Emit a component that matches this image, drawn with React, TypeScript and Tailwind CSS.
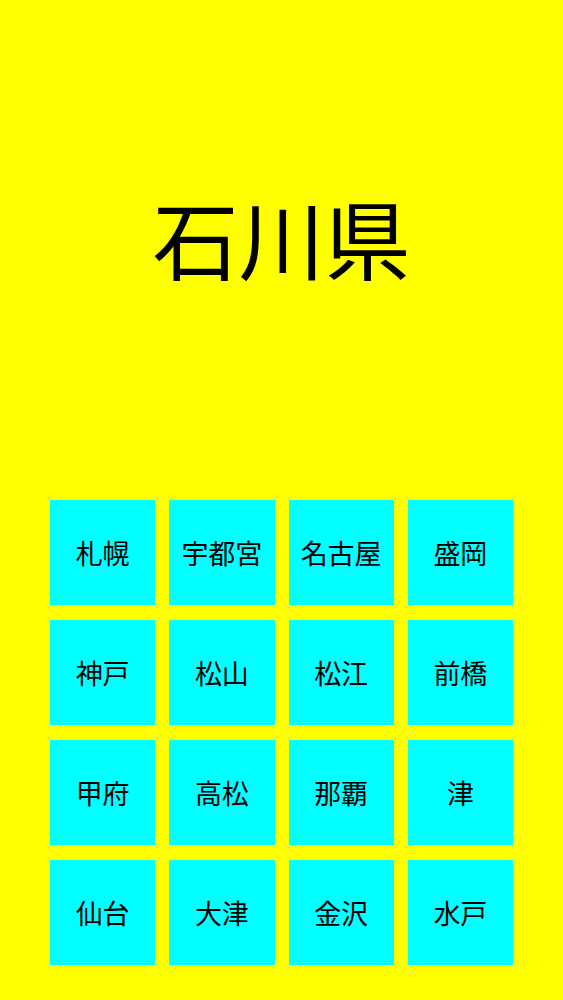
const cities = [
  '札幌', '宇都宮', '名古屋', '盛岡',
  '神戸', '松山', '松江', '前橋',
  '甲府', '高松', '那覇', '津',
  '仙台', '大津', '金沢', '水戸',
]

export default function App() {
  return (
    <div
      className="w-[563px] h-[1000px] bg-[#ffff00] flex flex-col items-center text-black"
      style={{ fontFamily: '"Noto Sans CJK JP", "Noto Sans", sans-serif' }}
    >
      <h1 className="mt-[194px] text-[86px] leading-none font-normal">石川県</h1>
      <div className="mt-[220px] w-[463px] grid grid-cols-4 gap-x-[14px] gap-y-[15px]">
        {cities.map((c) => (
          <button
            key={c}
            className="h-[105px] bg-[#00ffff] flex items-center justify-center text-[27px] leading-none"
          >
            {c}
          </button>
        ))}
      </div>
    </div>
  )
}
